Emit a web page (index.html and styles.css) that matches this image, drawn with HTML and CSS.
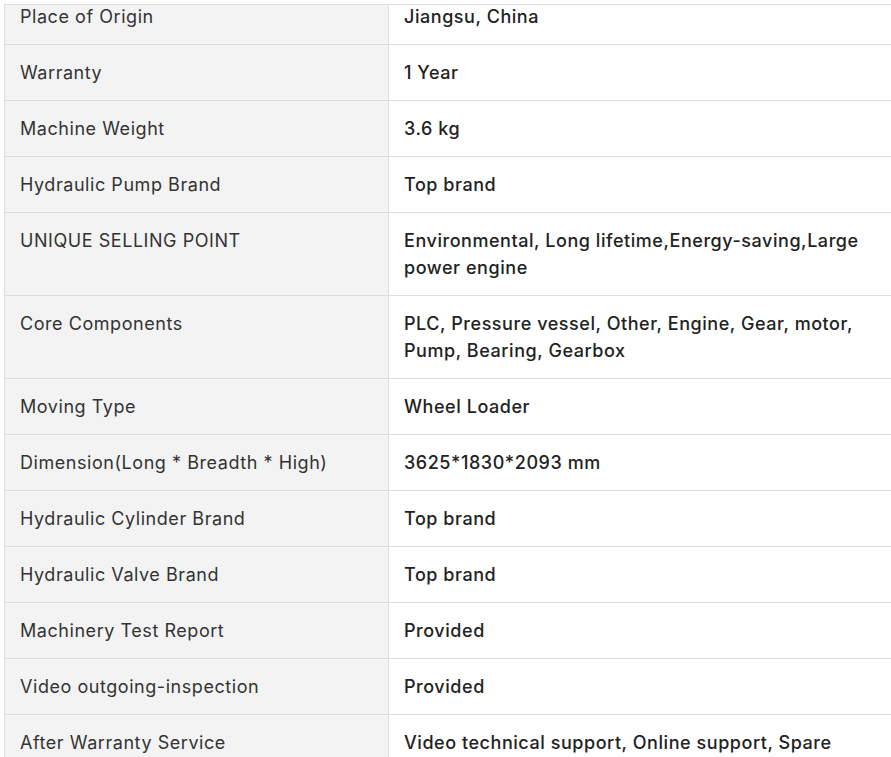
FILE: index.html
```html
<!DOCTYPE html>
<html lang="en">
<head>
<meta charset="utf-8">
<title>Specifications</title>
<link rel="stylesheet" href="styles.css">
</head>
<body>
<div class="clip">
  <table class="specs">
    <tbody>
      <tr><td class="k">Place of Origin</td><td class="v">Jiangsu, China</td></tr>
      <tr><td class="k">Warranty</td><td class="v">1 Year</td></tr>
      <tr><td class="k">Machine Weight</td><td class="v">3.6 kg</td></tr>
      <tr><td class="k">Hydraulic Pump Brand</td><td class="v">Top brand</td></tr>
      <tr><td class="k">UNIQUE SELLING POINT</td><td class="v">Environmental, Long lifetime,Energy-saving,Large power engine</td></tr>
      <tr><td class="k">Core Components</td><td class="v">PLC, Pressure vessel, Other, Engine, Gear, motor, Pump, Bearing, Gearbox</td></tr>
      <tr><td class="k">Moving Type</td><td class="v">Wheel Loader</td></tr>
      <tr><td class="k">Dimension(Long * Breadth * High)</td><td class="v">3625*1830*2093 mm</td></tr>
      <tr><td class="k">Hydraulic Cylinder Brand</td><td class="v">Top brand</td></tr>
      <tr><td class="k">Hydraulic Valve Brand</td><td class="v">Top brand</td></tr>
      <tr><td class="k">Machinery Test Report</td><td class="v">Provided</td></tr>
      <tr><td class="k">Video outgoing-inspection</td><td class="v">Provided</td></tr>
      <tr><td class="k">After Warranty Service</td><td class="v">Video technical support, Online support, Spare parts</td></tr>
    </tbody>
  </table>
</div>
</body>
</html>
```
FILE: styles.css
```css
html, body {
  margin: 0;
  padding: 0;
  background: #ffffff;
  overflow: hidden;
}
body {
  font-family: Inter, "Noto Sans", sans-serif;
  color: #222222;
}
.clip {
  margin: 4px 0 0 4px;
  width: 900px;
  height: 753px;
  overflow: hidden;
  border-top: 1px solid #dddddd;
  box-sizing: border-box;
}
.specs {
  border-collapse: collapse;
  table-layout: fixed;
  width: 900px;
  margin-top: -17px;
  font-size: 18px;
  line-height: 27px;
  letter-spacing: 0.55px;
}
.specs td {
  border: 1px solid #dddddd;
  padding: 14px 15px;
  vertical-align: top;
}
.specs .k {
  width: 384px;
  box-sizing: border-box;
  background: #f3f3f3;
  color: #333333;
  font-weight: 400;
}
.specs .v {
  padding-right: 34px;
  background: #ffffff;
  color: #222222;
  font-weight: 500;
}
```
